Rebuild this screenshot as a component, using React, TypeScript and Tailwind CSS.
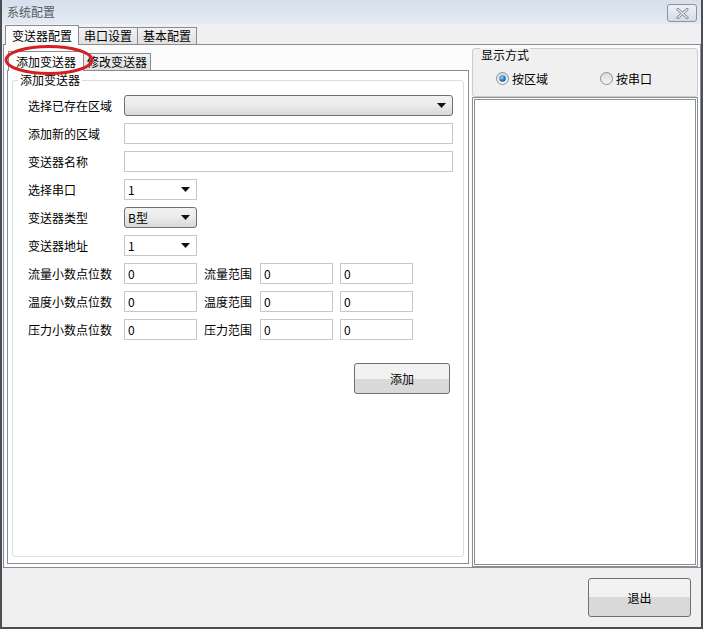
import React from "react";

const font = { fontFamily: '"Noto Sans CJK SC", "Noto Sans", sans-serif' };

function Arrow() {
  return (
    <svg width="9" height="5" viewBox="0 0 9 5" className="shrink-0">
      <path d="M0 0 L9 0 L4.5 5 Z" fill="#111" />
    </svg>
  );
}

function TextBox({ w, value = "" }: { w: string; value?: string }) {
  return (
    <div className={`${w} h-[21px] border border-[#c5c9cf] bg-white flex items-center pl-[3px] text-[12px] leading-none`}>
      {value}
    </div>
  );
}

function ComboWhite({ value }: { value: string }) {
  return (
    <div className="w-[73px] h-[21px] border border-[#c5c9cf] bg-white flex items-center justify-between pl-[3px] pr-[6px] text-[12px] leading-none">
      <span>{value}</span>
      <Arrow />
    </div>
  );
}

function ComboGray({ w, value }: { w: string; value: string }) {
  return (
    <div className={`${w} h-[21px] rounded-[3px] border border-[#707070] bg-gradient-to-b from-[#f2f2f2] via-[#ebebeb] to-[#d8d8d8] flex items-center justify-between pl-[3px] pr-[6px] text-[12px] leading-none`}>
      <span>{value}</span>
      <Arrow />
    </div>
  );
}

function Row({ label, children, mt }: { label: string; children: React.ReactNode; mt: string }) {
  return (
    <div className={`flex items-center ${mt}`}>
      <div className="w-[96px] text-[12px] leading-none">{label}</div>
      {children}
    </div>
  );
}

function Radio({ checked }: { checked: boolean }) {
  return (
    <svg width="13" height="13" viewBox="0 0 13 13" className="shrink-0">
      <defs>
        <radialGradient id="rg" cx="0.4" cy="0.35" r="0.7">
          <stop offset="0" stopColor="#9fd3ff" />
          <stop offset="0.6" stopColor="#2a7dc6" />
          <stop offset="1" stopColor="#124d85" />
        </radialGradient>
        <linearGradient id="rb" x1="0" y1="0" x2="0" y2="1">
          <stop offset="0" stopColor="#d8d8d8" />
          <stop offset="1" stopColor="#f6f6f6" />
        </linearGradient>
      </defs>
      <circle cx="6.5" cy="6.5" r="6" fill="url(#rb)" stroke="#8c8f94" strokeWidth="1" />
      {checked && <circle cx="6.5" cy="6.5" r="3.2" fill="url(#rg)" />}
    </svg>
  );
}

export default function App() {
  return (
    <div
      className="relative w-[703px] h-[629px] bg-[#f0f0f0] border-x-2 border-b-2 border-[#4a4f57] text-black overflow-hidden"
      style={font}
    >
      {/* Title bar */}
      <div className="h-[24px] bg-gradient-to-b from-[#d5e0ec] to-[#e3eaf2] flex items-center justify-between pl-[5px] pr-[4px]">
        <span className="text-[12px] leading-none text-[#555b63]">系统配置</span>
        <div className="w-[30px] h-[18px] mt-[2px] rounded-[3px] border border-[#8a929c] bg-gradient-to-b from-[#eef2f6] to-[#d3dbe4] flex items-center justify-center">
          <svg width="13" height="11" viewBox="0 0 13 11">
            <path d="M2 1.5 L11 9.5 M11 1.5 L2 9.5" stroke="#7b8490" strokeWidth="3" strokeLinecap="round" />
            <path d="M2 1.5 L11 9.5 M11 1.5 L2 9.5" stroke="#eef1f4" strokeWidth="1.2" strokeLinecap="round" />
          </svg>
        </div>
      </div>

      {/* Outer tabs */}
      <div className="h-[20px] flex items-end pl-[3px] bg-[#f0f0f0]">
        <div className="h-[20px] px-[6px] border border-b-0 border-[#898c95] bg-[#fcfcfc] flex items-center text-[12px] leading-none relative top-[1px] z-10">
          变送器配置
        </div>
        <div className="h-[17px] px-[5px] border border-b-0 border-l-0 border-[#898c95] bg-gradient-to-b from-[#f2f2f2] to-[#e0e0e0] flex items-center text-[12px] leading-none">
          串口设置
        </div>
        <div className="h-[17px] px-[5px] border border-b-0 border-l-0 border-[#898c95] bg-gradient-to-b from-[#f2f2f2] to-[#e0e0e0] flex items-center text-[12px] leading-none">
          基本配置
        </div>
      </div>

      {/* Outer pane */}
      <div className="ml-[1px] w-[698px] h-[524px] border border-[#898c95] bg-[#fcfcfc] flex pl-[3px] gap-[3px]">
        {/* Left inner tab control */}
        <div className="w-[462px] flex flex-col">
          <div className="h-[25px] flex items-end pl-[1px]">
            <div className="h-[20px] px-[7px] border border-b-0 border-[#898c95] bg-white flex items-center text-[12px] leading-none relative top-[1px] z-10">
              添加变送器
            </div>
            <div className="h-[17px] px-[3px] border border-b-0 border-l-0 border-[#898c95] bg-gradient-to-b from-[#f2f2f2] to-[#e0e0e0] flex items-center text-[12px] leading-none">
              修改变送器
            </div>
          </div>
          <div className="h-[494px] border border-[#898c95] bg-white pt-[9px] px-[4px] pb-[6px]">
            {/* Group box */}
            <div className="relative h-full border border-[#d5dfe5] rounded-[3px]">
              <div className="absolute -top-[8px] left-[5px] bg-white px-[2px] text-[12px] leading-[14px]">添加变送器</div>
              <div className="pl-[15px] pt-[14px]">
                <Row label="选择已存在区域" mt="mt-0">
                  <ComboGray w="w-[329px]" value="" />
                </Row>
                <Row label="添加新的区域" mt="mt-[7px]">
                  <TextBox w="w-[329px]" />
                </Row>
                <Row label="变送器名称" mt="mt-[7px]">
                  <TextBox w="w-[329px]" />
                </Row>
                <Row label="选择串口" mt="mt-[7px]">
                  <ComboWhite value="1" />
                </Row>
                <Row label="变送器类型" mt="mt-[7px]">
                  <ComboGray w="w-[73px]" value="B型" />
                </Row>
                <Row label="变送器地址" mt="mt-[7px]">
                  <ComboWhite value="1" />
                </Row>
                {[
                  ["流量小数点位数", "流量范围"],
                  ["温度小数点位数", "温度范围"],
                  ["压力小数点位数", "压力范围"],
                ].map(([a, b]) => (
                  <div key={a} className="flex items-center mt-[7px]">
                    <div className="w-[96px] text-[12px] leading-none">{a}</div>
                    <TextBox w="w-[73px]" value="0" />
                    <div className="w-[63px] pl-[7px] text-[12px] leading-none">{b}</div>
                    <TextBox w="w-[73px]" value="0" />
                    <div className="w-[7px]" />
                    <TextBox w="w-[73px]" value="0" />
                  </div>
                ))}
                <div className="flex justify-end pr-[13px] mt-[23px]">
                  <div className="w-[96px] h-[31px] rounded-[3px] border border-[#707070] bg-gradient-to-b from-[#f2f2f2] from-50% to-[#d9d9d9] to-50% flex items-center justify-center text-[12px] leading-none">
                    添加
                  </div>
                </div>
              </div>
            </div>
          </div>
        </div>

        {/* Right column */}
        <div className="w-[226px] flex flex-col pt-[3px]">
          <div className="relative h-[49px] border border-[#c8cdd2] rounded-[3px] bg-[#f0f0f0]">
            <div className="absolute -top-[1px] left-[7px] px-[1px] text-[12px] leading-[14px] bg-[#f0f0f0]">显示方式</div>
            <div className="flex items-center pt-[23px] pl-[23px]">
              <div className="flex items-center gap-[3px] w-[104px] text-[12px] leading-none">
                <Radio checked />
                <span>按区域</span>
              </div>
              <div className="flex items-center gap-[3px] text-[12px] leading-none">
                <Radio checked={false} />
                <span>按串口</span>
              </div>
            </div>
          </div>
          <div className="h-[470px] border-[3px] border-double border-[#8c8f94] bg-white" />
        </div>
      </div>

      {/* Bottom */}
      <div className="flex justify-end pr-[10px] pt-[10px]">
        <div className="w-[103px] h-[39px] rounded-[3px] border border-[#707070] bg-gradient-to-b from-[#f2f2f2] from-50% to-[#d9d9d9] to-50% flex items-center justify-center text-[12px] leading-none">
          退出
        </div>
      </div>

      {/* Red annotation ellipse */}
      <svg className="absolute left-[1px] top-[44px] z-20 pointer-events-none" width="92" height="32" viewBox="0 0 92 32">
        <ellipse cx="46" cy="16" rx="43" ry="13.5" fill="none" stroke="#d42020" strokeWidth="3" />
      </svg>
    </div>
  );
}
